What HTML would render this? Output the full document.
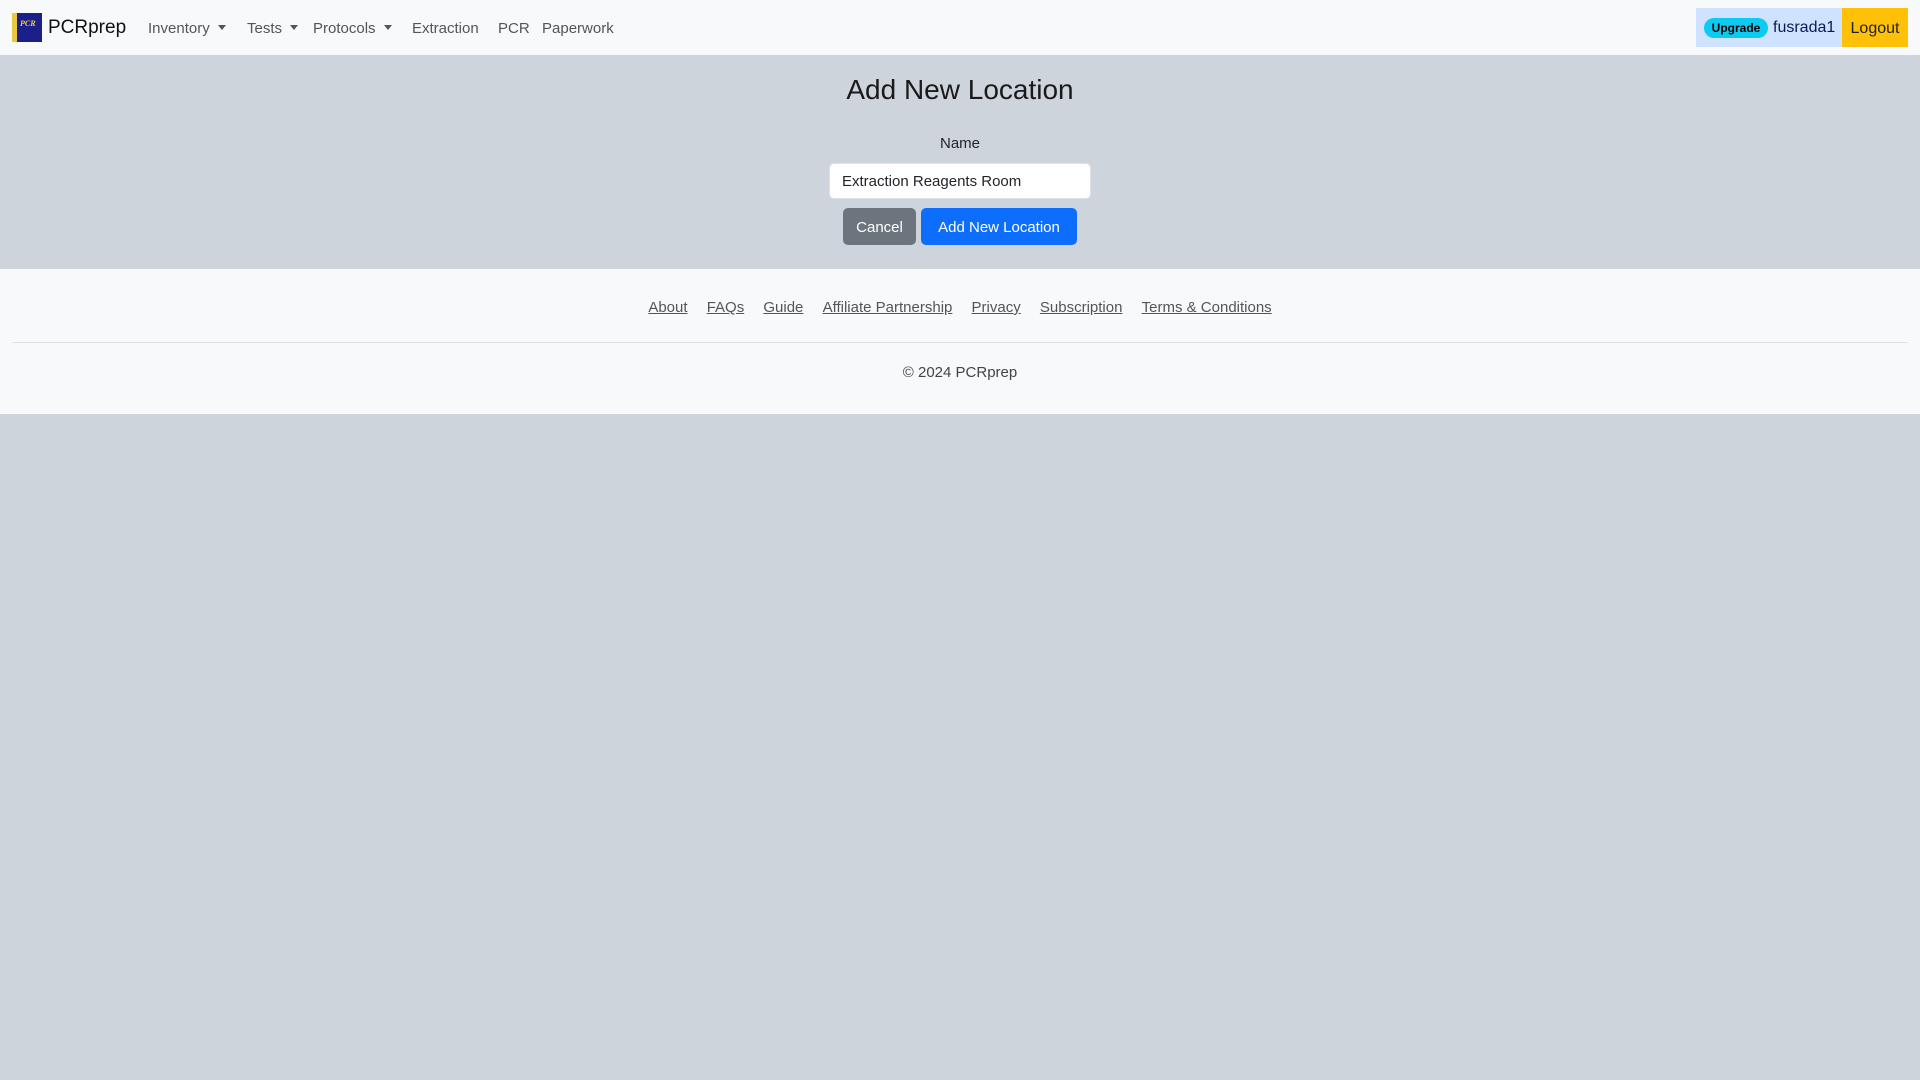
<!DOCTYPE html>
<html><head><meta charset="utf-8"><style>
*{box-sizing:border-box;margin:0;padding:0}
body{width:1920px;height:1080px;background:#ced4dc;font-family:"Liberation Sans",sans-serif;color:#212529;font-size:16px}
nav{height:55px;background:#f8f9fa;position:relative}
.logo{position:absolute;left:12px;top:13px;width:30px;height:29px;background:#1a1f8a;border-left:5px solid #e8c840}
.logo span{position:absolute;left:3px;top:6px;font:italic bold 8px "Liberation Serif",serif;color:#f2d040}
.brand{position:absolute;left:48px;top:17px;font-size:19px;color:#111}
.nl{position:absolute;top:20px;font-size:15px;color:#555}
.car{display:inline-block;border-top:5px solid #555;border-left:4px solid transparent;border-right:4px solid transparent;margin-left:8px;vertical-align:3px}
.user{position:absolute;left:1696px;top:8px;width:146px;height:39px;background:#cfe2ff}
.badge{position:absolute;left:8px;top:10px;width:64px;height:20px;border-radius:10px;background:#0dcaf0;font-weight:bold;font-size:12px;text-align:center;line-height:20px;color:#000}
.uname{position:absolute;left:77px;top:11px;font-size:16px;color:#0a1a5a}
.logout{position:absolute;left:1842px;top:8px;width:66px;height:39px;background:#ffc107;font-size:16px;line-height:41px;text-align:center;color:#222}
h3{position:absolute;top:74px;width:100%;text-align:center;font-size:28px;font-weight:500;color:#1a1a1a}
.lbl{position:absolute;top:135px;width:100%;text-align:center;font-size:15px}
.inp{position:absolute;left:829px;top:163px;width:262px;height:36px;background:#fff;border-radius:5px;border:1px solid #dee2e6;padding:9px 12px;font-size:15px}
.btn{position:absolute;top:208px;height:37px;border-radius:5px;color:#fff;font-size:15px;line-height:39px;text-align:center}
footer{position:absolute;top:269px;left:0;width:1920px;height:145px;background:#f8f9fa}
.links{position:absolute;top:30px;width:100%;text-align:center;font-size:15px}
.links a{color:#555;text-decoration:underline;margin:0 7.5px}
hr{position:absolute;top:73px;left:12px;width:1896px;border:0;border-top:1px solid #dee2e6}
.copy{position:absolute;top:95px;width:100%;text-align:center;font-size:15px;color:#444}
</style></head><body>
<nav>
<div class="logo"><span>PCR</span></div>
<div class="brand">PCRprep</div>
<div class="nl" style="left:148px">Inventory<span class="car"></span></div>
<div class="nl" style="left:247px">Tests<span class="car"></span></div>
<div class="nl" style="left:313px">Protocols<span class="car"></span></div>
<div class="nl" style="left:412px">Extraction</div>
<div class="nl" style="left:498px">PCR</div>
<div class="nl" style="left:542px">Paperwork</div>
<div class="user"><div class="badge">Upgrade</div><div class="uname">fusrada1</div></div>
<div class="logout">Logout</div>
</nav>
<h3>Add New Location</h3>
<div class="lbl">Name</div>
<div class="inp">Extraction Reagents Room</div>
<div class="btn" style="left:843px;width:73px;background:#6c757d">Cancel</div>
<div class="btn" style="left:921px;width:156px;background:#0d6efd">Add New Location</div>
<footer>
<div class="links"><a>About</a> <a>FAQs</a> <a>Guide</a> <a>Affiliate Partnership</a> <a>Privacy</a> <a>Subscription</a> <a>Terms &amp; Conditions</a></div>
<hr>
<div class="copy">© 2024 PCRprep</div>
</footer>
</body></html>
